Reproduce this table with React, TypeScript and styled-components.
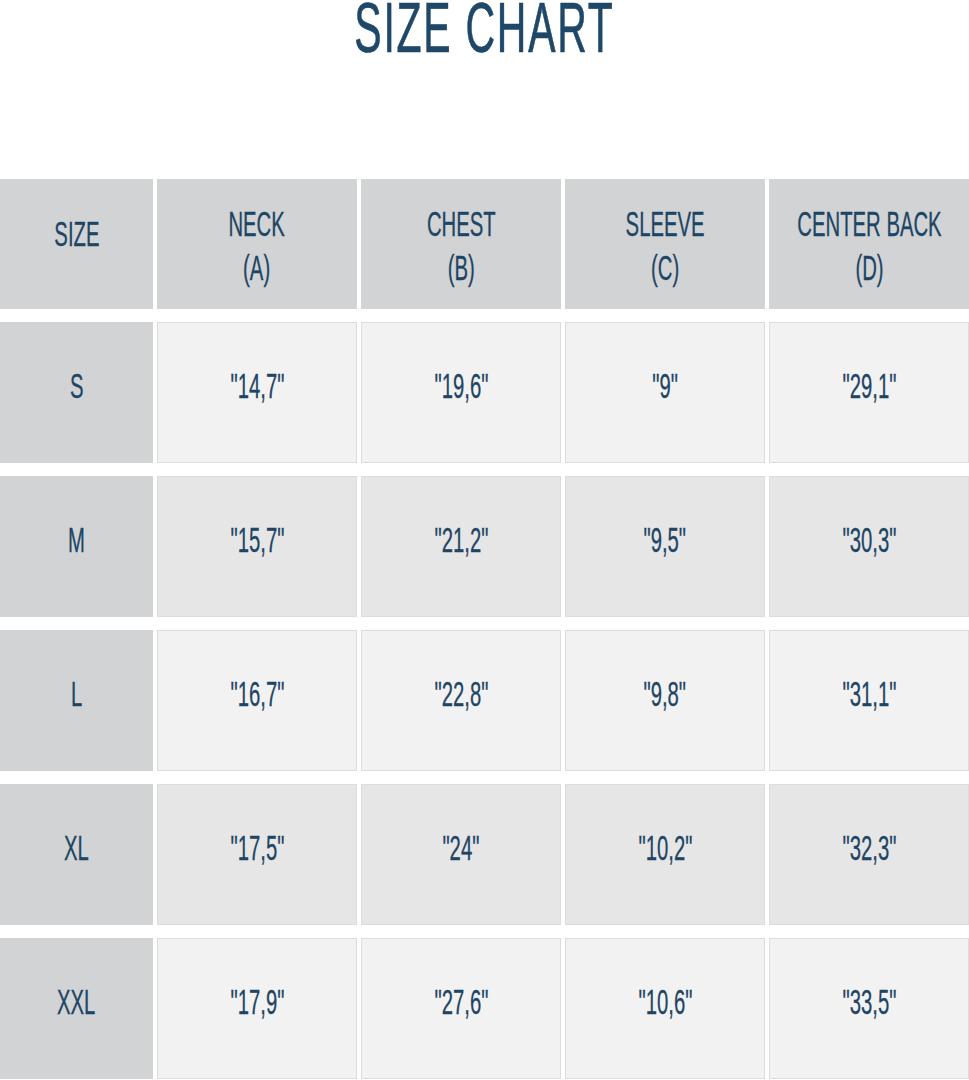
import React from "react";
import styled, { createGlobalStyle } from "styled-components";

const Global = createGlobalStyle`
  html, body { margin: 0; padding: 0; background: #ffffff; }
  body { font-family: "Liberation Sans", Arial, sans-serif; }
`;

const Page = styled.div`
  width: 969px;
  display: flex;
  flex-direction: column;
`;

const TitleBar = styled.div`
  height: 179px;
  display: flex;
  justify-content: center;
  align-items: flex-start;
`;

const Title = styled.h1`
  margin: 0;
  font-family: "Liberation Sans", Arial, sans-serif;
  font-weight: 400;
  font-size: 70px;
  line-height: 56px;
  letter-spacing: 3px;
  color: #1f4868;
  display: inline-block;
  transform: scaleX(0.585);
  -webkit-text-stroke: 0.7px #1f4868;
`;

const Table = styled.div`
  display: grid;
  grid-template-columns: 153px repeat(4, minmax(0, 1fr));
  grid-template-rows: 130px;
  grid-auto-rows: 141px;
  column-gap: 4px;
  row-gap: 13px;
`;

type CellKind = "head" | "side" | "light" | "dark";

const bg: Record<CellKind, string> = {
  head: "#d1d3d5",
  side: "#d1d3d5",
  light: "#f2f2f2",
  dark: "#e6e6e6",
};

const Cell = styled.div<{ $kind: CellKind; $lift?: number }>`
  box-sizing: border-box;
  min-width: 0;
  background: ${(p) => bg[p.$kind]};
  border: 1px solid
    ${(p) => (p.$kind === "light" || p.$kind === "dark" ? "#dcdcdc" : bg[p.$kind])};
  display: flex;
  align-items: center;
  justify-content: center;
  padding-bottom: ${(p) => Math.max(0, p.$lift ?? 12)}px;
  padding-top: ${(p) => Math.max(0, -(p.$lift ?? 12))}px;
`;

const Label = styled.span`
  display: inline-block;
  font-family: "Liberation Sans", Arial, sans-serif;
  font-size: 35px;
  line-height: 44px;
  color: #1e4564;
  text-align: center;
  white-space: nowrap;
  transform: scaleX(0.58);
  -webkit-text-stroke: 0.3px #1e4564;
`;

const headers = [
  ["SIZE"],
  ["NECK", "(A)"],
  ["CHEST", "(B)"],
  ["SLEEVE", "(C)"],
  ["CENTER BACK", "(D)"],
];

const rows = [
  ["S", '"14,7"', '"19,6"', '"9"', '"29,1"'],
  ["M", '"15,7"', '"21,2"', '"9,5"', '"30,3"'],
  ["L", '"16,7"', '"22,8"', '"9,8"', '"31,1"'],
  ["XL", '"17,5"', '"24"', '"10,2"', '"32,3"'],
  ["XXL", '"17,9"', '"27,6"', '"10,6"', '"33,5"'],
];

export default function App() {
  return (
    <Page>
      <Global />
      <TitleBar>
        <Title>SIZE CHART</Title>
      </TitleBar>
      <Table>
        {headers.map((h, i) => (
          <Cell key={"h" + i} $kind="head" $lift={h.length === 1 ? 20 : -4}>
            <Label>
              {h.map((line, j) => (
                <React.Fragment key={j}>
                  {j > 0 && <br />}
                  {line}
                </React.Fragment>
              ))}
            </Label>
          </Cell>
        ))}
        {rows.map((r, ri) =>
          r.map((v, ci) => (
            <Cell
              key={ri + "-" + ci}
              $kind={ci === 0 ? "side" : ri % 2 === 0 ? "light" : "dark"}
              $lift={14}
            >
              <Label>{v}</Label>
            </Cell>
          ))
        )}
      </Table>
    </Page>
  );
}
